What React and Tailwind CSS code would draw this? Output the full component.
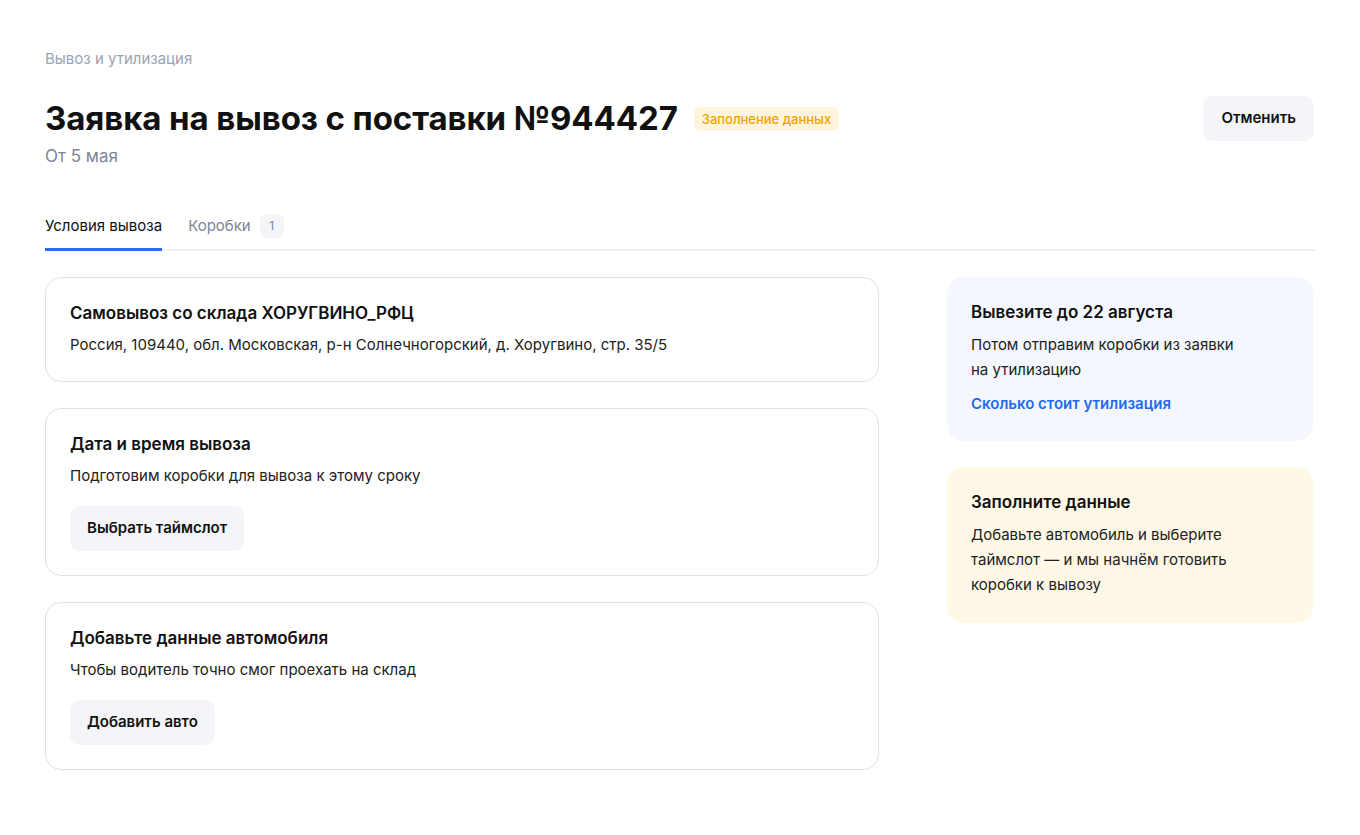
import { useState } from 'react';

const cardClass = 'rounded-2xl border border-[#dde2ea] bg-white px-6 pt-[23px] pb-[24px]';
const btnClass = 'h-[45px] rounded-[10px] bg-[#f3f5f8] px-[17px] text-[15px] font-semibold text-[#111]';

function App() {
  const [tab, setTab] = useState('terms');

  return (
    <div className="min-h-screen bg-white px-[45px] pt-[48px] text-[#111] [font-family:Inter,'Noto_Sans',sans-serif]">
      <div className="text-[15px] leading-[22px] text-[#9aa3b2]">Вывоз и утилизация</div>

      <div className="mt-[26px] flex items-start justify-between">
        <div>
          <div className="flex items-center gap-[16px]">
            <h1 className="text-[33px] font-bold leading-[44px] tracking-[-0.1px]">Заявка на вывоз с поставки №944427</h1>
            <span className="mt-[2px] rounded-md bg-[#fff5dc] px-[8px] py-[3px] text-[13px] font-medium leading-[18px] text-[#f5a300]">
              Заполнение данных
            </span>
          </div>
          <div className="mt-[5px] text-[17px] leading-[22px] text-[#7d8594]">От 5 мая</div>
        </div>
        <button className={btnClass + ' mr-[1px] px-[18px]'}>Отменить</button>
      </div>

      <div className="mt-[47px] flex border-b-2 border-[#eef0f4]">
        <button
          onClick={() => setTab('terms')}
          className={`-mb-[2px] border-b-[3px] pb-[10px] text-[15px] leading-[24px] ${tab === 'terms' ? 'border-[#2a6ef5] text-[#111]' : 'border-transparent text-[#7d8594]'}`}
        >
          Условия вывоза
        </button>
        <button
          onClick={() => setTab('boxes')}
          className={`-mb-[2px] ml-[26px] flex items-start gap-[9px] border-b-[3px] pb-[10px] text-[15px] leading-[24px] ${tab === 'boxes' ? 'border-[#2a6ef5] text-[#111]' : 'border-transparent text-[#7d8594]'}`}
        >
          Коробки
          <span className="flex h-[24px] w-[24px] items-center justify-center rounded-md bg-[#f3f5f8] text-[12px] text-[#7d8594]">1</span>
        </button>
      </div>

      <div className="mt-[26px] flex gap-[68px]">
        <div className="flex w-[834px] flex-col gap-[26px]">
          <div className={cardClass}>
            <div className="text-[17px] font-semibold leading-[24px]">Самовывоз со склада ХОРУГВИНО_РФЦ</div>
            <div className="mt-[8px] text-[15px] leading-[24px] text-[#222]">
              Россия, 109440, обл. Московская, р-н Солнечногорский, д. Хоругвино, стр. 35/5
            </div>
          </div>

          <div className={cardClass}>
            <div className="text-[17px] font-semibold leading-[24px]">Дата и время вывоза</div>
            <div className="mt-[8px] text-[15px] leading-[24px] text-[#222]">Подготовим коробки для вывоза к этому сроку</div>
            <button className={btnClass + ' mt-[18px]'}>Выбрать таймслот</button>
          </div>

          <div className={cardClass}>
            <div className="text-[17px] font-semibold leading-[24px]">Добавьте данные автомобиля</div>
            <div className="mt-[8px] text-[15px] leading-[24px] text-[#222]">Чтобы водитель точно смог проехать на склад</div>
            <button className={btnClass + ' mt-[18px]'}>Добавить авто</button>
          </div>
        </div>

        <div className="flex w-[366px] flex-col gap-[26px]">
          <div className="rounded-2xl bg-[#f4f8fe] px-6 pt-[23px] pb-[25px]">
            <div className="text-[17px] font-semibold leading-[24px]">Вывезите до 22 августа</div>
            <div className="mt-[8px] w-[280px] text-[15px] leading-[25px] text-[#222]">
              Потом отправим коробки из заявки на утилизацию
            </div>
            <a href="#" className="mt-[10px] block text-[15px] font-semibold leading-[24px] text-[#1f6bf0]">Сколько стоит утилизация</a>
          </div>

          <div className="rounded-2xl bg-[#fff8e6] px-6 pt-[23px] pb-[26px]">
            <div className="text-[17px] font-semibold leading-[24px]">Заполните данные</div>
            <div className="mt-[8px] w-[275px] text-[15px] leading-[25px] text-[#222]">
              Добавьте автомобиль и выберите таймслот — и мы начнём готовить коробки к вывозу
            </div>
          </div>
        </div>
      </div>
    </div>
  );
}

export default App;
